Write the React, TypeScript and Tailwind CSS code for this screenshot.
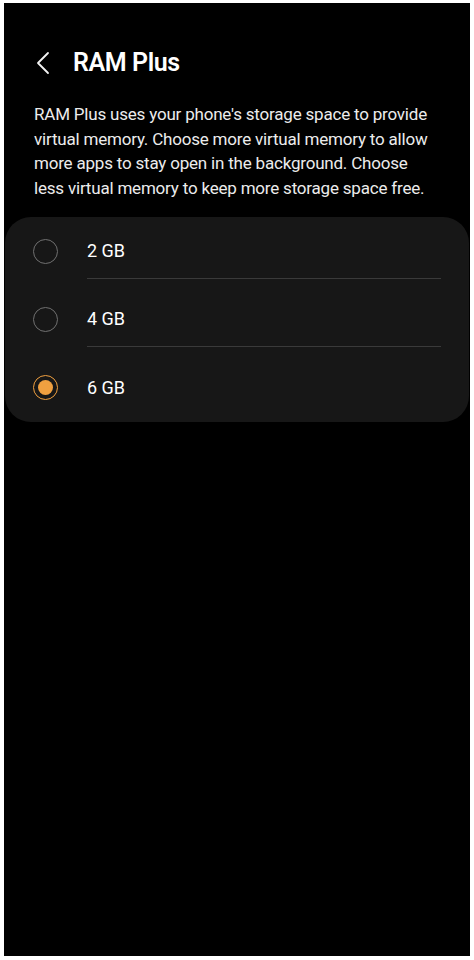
import { useState } from "react";

const options = ["2 GB", "4 GB", "6 GB"];

function Radio({ checked }: { checked: boolean }) {
  return checked ? (
    <span className="flex h-[25px] w-[25px] shrink-0 items-center justify-center rounded-full border-[1.5px] border-[#f0a040]">
      <span className="h-[15px] w-[15px] rounded-full bg-[#f0a040]" />
    </span>
  ) : (
    <span className="h-[25px] w-[25px] shrink-0 rounded-full border-[1.5px] border-[#707070]" />
  );
}

export default function App() {
  const [selected, setSelected] = useState(2);

  return (
    <div className="h-[960px] bg-white pt-[3px] pb-[4px] px-[4px]">
      <div className="flex h-full flex-col bg-black font-['Roboto',sans-serif] text-[#f2f2f2]">
        {/* Header */}
        <div className="mt-[40px] flex h-[40px] items-center pl-[30px]">
          <svg width="20" height="24" viewBox="0 0 20 24">
            <path d="M14 2 L4 12 L14 22" fill="none" stroke="#f2f2f2" strokeWidth="1.8" strokeLinecap="round" strokeLinejoin="round" />
          </svg>
          <h1 className="ml-[19px] text-[25px] font-semibold tracking-[-0.4px] text-white">RAM Plus</h1>
        </div>

        {/* Description */}
        <p className="mt-[19px] px-[30px] text-[17px] leading-[24.5px] tracking-[-0.2px] text-[#ececec]">
          RAM Plus uses your phone's storage space to provide virtual memory. Choose more virtual memory to allow more apps to stay open in the background. Choose less virtual memory to keep more storage space free.
        </p>

        {/* Options */}
        <div className="mx-[1px] mt-[17px] flex flex-col gap-[12px] rounded-[26px] bg-[#171717] px-[28px] pt-[6px] pb-[7px]">
          {options.map((opt, i) => (
            <button
              key={opt}
              onClick={() => setSelected(i)}
              className="flex h-[56px] w-full items-center text-left"
            >
              <Radio checked={selected === i} />
              <span
                className={`ml-[29px] flex h-full flex-1 items-center text-[18px] text-white ${
                  i < options.length - 1 ? "border-b border-[#3a3a3a]" : ""
                }`}
              >
                {opt}
              </span>
            </button>
          ))}
        </div>
      </div>
    </div>
  );
}
